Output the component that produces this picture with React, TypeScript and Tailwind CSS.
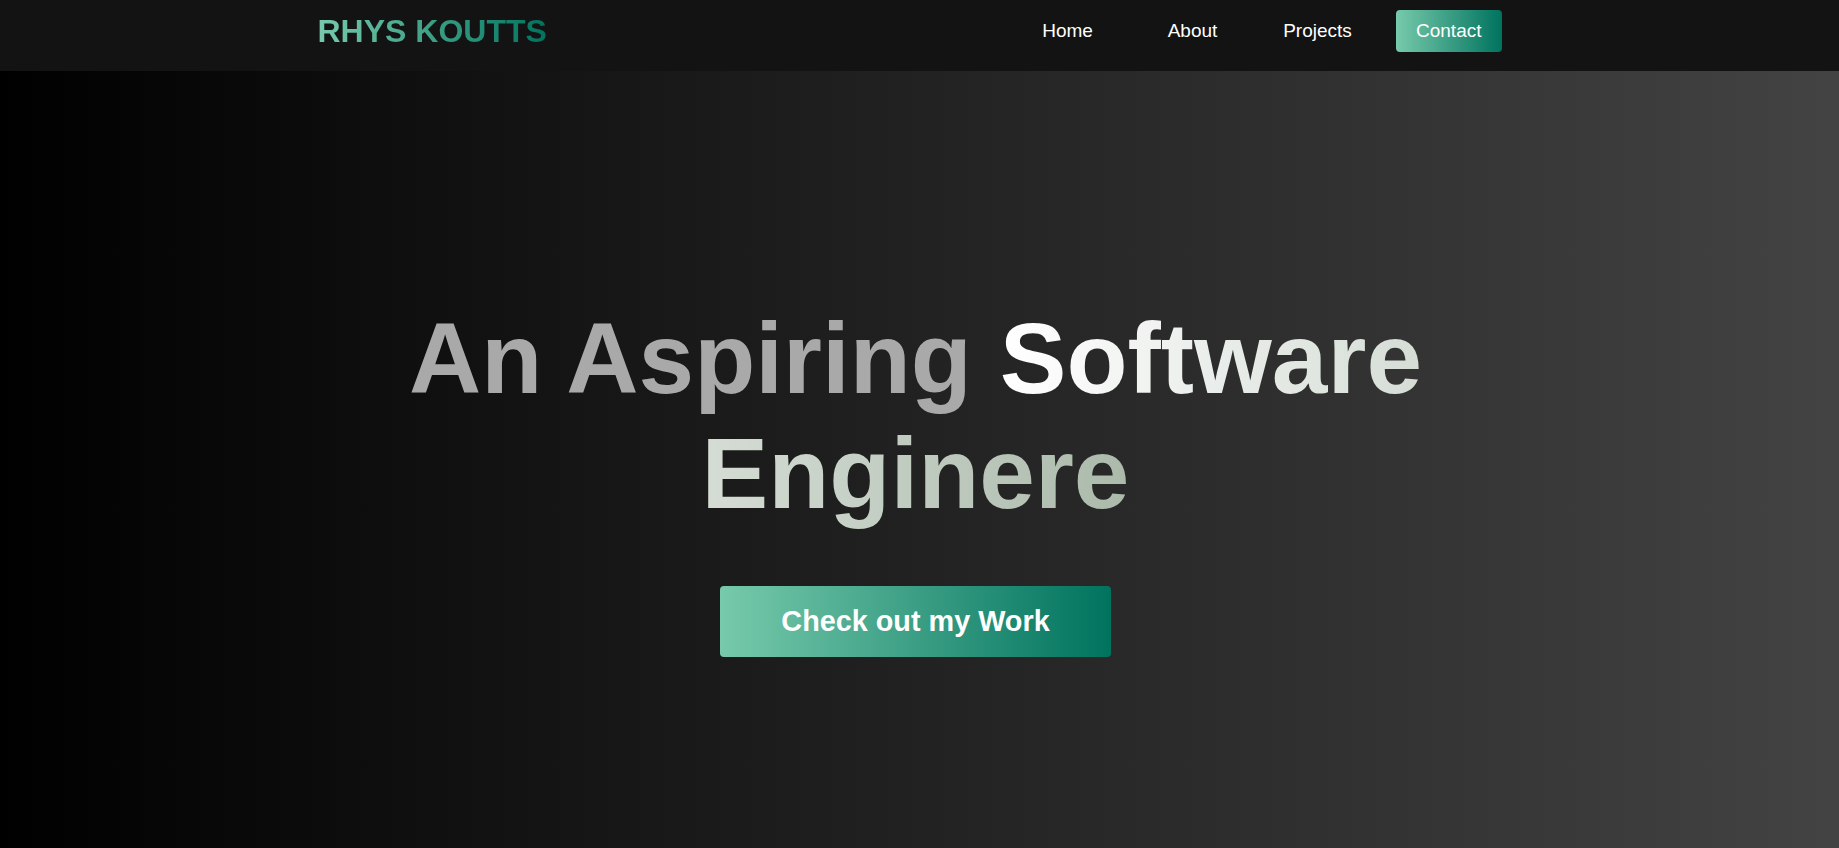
import React from 'react';

const navLinks = ['Home', 'About', 'Projects'];

export default function App() {
  return (
    <div className="min-h-screen bg-[linear-gradient(to_right,#000000,#434343)] font-['Liberation_Sans',Arial,sans-serif] leading-[normal]">
      {/* Top bar */}
      <nav className="h-[71px] bg-[#131313] pb-[9px]">
        <div className="mx-auto flex h-full w-[1204px] items-center justify-between pr-5">
          <a
            href="#"
            className="bg-[linear-gradient(to_right,#77caab,#00735e)] bg-clip-text text-[32px] font-bold text-transparent"
          >
            RHYS KOUTTS
          </a>
          <ul className="flex items-center gap-8">
            {navLinks.map((link) => (
              <li key={link} className="w-[93px] text-center">
                <a href="#" className="text-[19px] text-white">
                  {link}
                </a>
              </li>
            ))}
            <li>
              <a
                href="#"
                className="block rounded bg-[linear-gradient(to_right,#77caab,#00735e)] px-5 py-[10px] text-[19px] text-white"
              >
                Contact
              </a>
            </li>
          </ul>
        </div>
      </nav>

      {/* Hero */}
      <section className="flex h-[777px] flex-col items-center pr-2 pt-[230px]">
        <h1 className="max-w-[1100px] text-center text-[100px] font-bold leading-[115px] text-[#a9a9a9]">
          An Aspiring{' '}
          <span className="bg-[linear-gradient(to_right,#ffffff,#abbaab)] bg-clip-text text-transparent">
            Software Enginere
          </span>
        </h1>
        <button className="mt-[55px] rounded bg-[linear-gradient(to_right,#77caab,#00735e)] px-[61px] py-[19px] text-[28.8px] font-bold text-white">
          Check out my Work
        </button>
      </section>
    </div>
  );
}
